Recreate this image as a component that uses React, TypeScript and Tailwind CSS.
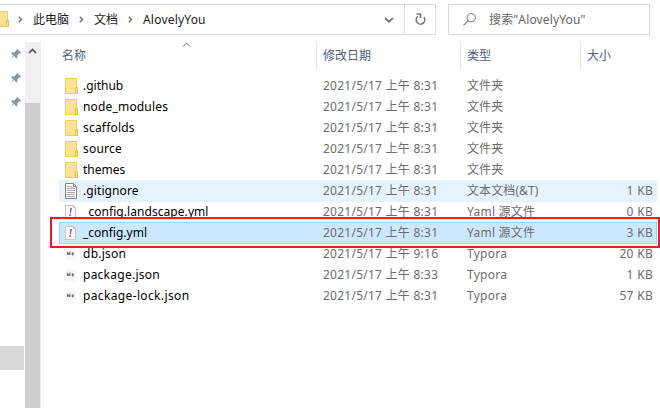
type Kind = 'folder' | 'text' | 'yaml' | 'typora';
type Entry = { name: string; kind: Kind; date: string; type: string; size?: string; tracking: string; state?: 'hover' | 'selected' };

const entries: Entry[] = [
  { name: '.github', kind: 'folder', date: '2021/5/17 上午 8:31', type: '文件夹', tracking: 'tracking-[0px]' },
  { name: 'node_modules', kind: 'folder', date: '2021/5/17 上午 8:31', type: '文件夹', tracking: 'tracking-[0.17px]' },
  { name: 'scaffolds', kind: 'folder', date: '2021/5/17 上午 8:31', type: '文件夹', tracking: 'tracking-[0.2px]' },
  { name: 'source', kind: 'folder', date: '2021/5/17 上午 8:31', type: '文件夹', tracking: 'tracking-[0.2px]' },
  { name: 'themes', kind: 'folder', date: '2021/5/17 上午 8:31', type: '文件夹', tracking: 'tracking-[0px]' },
  { name: '.gitignore', kind: 'text', date: '2021/5/17 上午 8:31', type: '文本文档(&T)', size: '1 KB', tracking: 'tracking-[0.1px]', state: 'hover' },
  { name: '_config.landscape.yml', kind: 'yaml', date: '2021/5/17 上午 8:31', type: 'Yaml 源文件', size: '0 KB', tracking: 'tracking-[0.06px]' },
  { name: '_config.yml', kind: 'yaml', date: '2021/5/17 上午 8:31', type: 'Yaml 源文件', size: '3 KB', tracking: 'tracking-[0px]', state: 'selected' },
  { name: 'db.json', kind: 'typora', date: '2021/5/17 上午 9:16', type: 'Typora', size: '20 KB', tracking: 'tracking-[0.25px]' },
  { name: 'package.json', kind: 'typora', date: '2021/5/17 上午 8:33', type: 'Typora', size: '1 KB', tracking: 'tracking-[0.25px]' },
  { name: 'package-lock.json', kind: 'typora', date: '2021/5/17 上午 8:31', type: 'Typora', size: '57 KB', tracking: 'tracking-[0.36px]' },
];

function FileIcon({ kind }: { kind: Kind }) {
  if (kind === 'folder')
    return (
      <svg className="block h-4 w-[13px]" viewBox="0 0 13 16">
        <path d="M.5.5h11v15H.5z" fill="#ffe393" stroke="#efcd5c" />
        <path d="M10.5 9.5h2v6h-2z" fill="#ffe393" stroke="#e6bd42" />
      </svg>
    );
  if (kind === 'text')
    return (
      <svg className="block h-4 w-[13px]" viewBox="0 0 13 16">
        <path d="M.5.5h8l3 3v12H.5z" fill="#fafafa" stroke="#858585" />
        <path d="M8.5.5v3h3" fill="none" stroke="#858585" />
        <path d="M2 3.5h5M2 5.5h8M2 7.5h8M2 9.5h8M2 11.5h8M2 13.5h8" stroke="#a8a8a8" />
      </svg>
    );
  if (kind === 'yaml')
    return (
      <svg className="block h-4 w-[13px]" viewBox="0 0 13 16">
        <path d="M.5 1.5h8l2 2v11H.5z" fill="#f8f8f8" stroke="#c4c4c4" />
        <path d="M8.5 1.5v2h2" fill="none" stroke="#c4c4c4" />
        <path d="M5.200 4h1.800L5.900 9.200H4.800zM4.500 10.200h1.500l-.3 1.700H4.200z" fill="#8e5bb5" />
      </svg>
    );
  return (
    <svg className="block h-4 w-[13px]" viewBox="0 0 13 16">
      <path d="M1 2h8l2 2v10H1z" fill="#f6f6f6" />
      <path d="M2.500 9V6.500L3.700 8l1.200-1.500V9M7.800 6v3M6.700 7.500l1.100 1.300 1.100-1.300" fill="none" stroke="#707070" strokeWidth="1.100" />
    </svg>
  );
}

function Chevron() {
  return (
    <svg className="h-[7px] w-[5px] shrink-0" viewBox="0 0 5 7">
      <path d="M.8.700l2.700 2.800L.8 6.300" fill="none" stroke="#777" strokeWidth="1.500" />
    </svg>
  );
}

function Pin() {
  return (
    <svg className="block h-3 w-3" viewBox="0 0 12 12">
      <path d="M7 .8l4.200 4-1.200.6-.7-.2-2 2.100.1 2.300-1 1L4 8.100.8 11.300.6 11l2.700-3.600L1 5.300l1-1 2.400.1 2.300-2.200-.3-.7z" fill="#8794a0" />
    </svg>
  );
}

export default function App() {
  return (
    <div className="relative flex h-[408px] w-[660px] flex-col overflow-hidden bg-white pt-1 text-[12px] leading-[20px] [font-family:'Noto_Sans','Noto_Sans_CJK_SC',sans-serif]">
      <div className="flex h-[31px] shrink-0">
        <div className="flex w-[436px] border border-l-0 border-[#d9d9d9]">
          <div className="flex grow items-center text-[#191919]">
            <svg className="mb-px h-4 w-[9px]" viewBox="0 0 9 16">
              <path d="M-1 .5h8.500v15H-1z" fill="#ffe393" stroke="#efcd5c" />
              <path d="M6.500 9.500h2v6h-2z" fill="#ffe393" stroke="#e6bd42" />
            </svg>
            <div className="ml-[9px] flex"><Chevron /></div>
            <span className="ml-[10px] w-9">此电脑</span>
            <div className="ml-[10px] flex"><Chevron /></div>
            <span className="ml-[10px] w-6">文档</span>
            <div className="ml-[10px] flex"><Chevron /></div>
            <span className="ml-[10px] tracking-[0.2px]">AlovelyYou</span>
          </div>
          <div className="flex w-[29px] items-center justify-center pr-px">
            <svg className="h-[6px] w-[10px]" viewBox="0 0 10 6"><path d="M1 1l4 3.700L9 1" fill="none" stroke="#777" strokeWidth="1.800" /></svg>
          </div>
          <div className="flex w-[31px] items-center justify-center border-l border-[#d9d9d9] pb-px">
            <svg className="h-[12px] w-[11px]" viewBox="0 0 11 12">
              <path d="M2.800 3.400A4.300 4.300 0 1 0 9 4.300M1.500 1h4v4" fill="none" stroke="#757575" strokeWidth="1.600" />
            </svg>
          </div>
        </div>
        <div className="ml-3 flex w-[202px] items-center border border-[#d9d9d9] pl-[14px] text-[#666]">
          <svg className="mb-px h-[13px] w-[13px]" viewBox="0 0 13 13">
            <circle cx="8.200" cy="4.700" r="4.100" fill="none" stroke="#757575" />
            <path d="M5.300 7.600L.5 12.400" stroke="#757575" strokeWidth="1.100" />
          </svg>
          <span className="ml-[13px] tracking-[0.15px]">搜索"AlovelyYou"</span>
        </div>
      </div>

      <div className="mt-[7px] flex grow">
        <div className="flex w-[25px] flex-col">
          <div className="flex flex-col gap-3 pt-[6px] pl-[10px]"><Pin /><Pin /><Pin /></div>
          <div className="mt-[238px] h-6 w-6 bg-[#d9d9d9]" />
        </div>
        <div className="flex w-4 flex-col bg-[#f0f0f0]">
          <div className="flex h-[61px] justify-center pt-[6px] pr-px">
            <svg className="h-[6px] w-[9px]" viewBox="0 0 9 6"><path d="M1 5l3.500-3.500L8 5" fill="none" stroke="#505050" strokeWidth="1.700" /></svg>
          </div>
          <div className="w-[15px] grow bg-[#cdcdcd]" />
        </div>
        <div className="ml-[2px] w-px bg-[#f3f3f3]" />

        <div className="flex grow flex-col">
          <div className="flex h-[27px] items-center text-[#4c607a]">
            <div className="flex h-full w-[272px] items-start pl-[18px]">
              <span className="pt-1">名称</span>
              <svg className="ml-[96px] h-[5px] w-[9px]" viewBox="0 0 9 5"><path d="M1 4.500L4.500 1 8 4.500" fill="none" stroke="#606060" /></svg>
            </div>
            <div className="flex h-full w-36 items-center border-l border-[#e5e5e5] pl-[6px]">修改日期</div>
            <div className="flex h-full w-[120px] items-center border-l border-[#e5e5e5] pl-[6px]">类型</div>
            <div className="flex h-full grow items-center border-l border-[#e5e5e5] pl-[6px]">大小</div>
          </div>
          <div className="mt-[6px] ml-[15px] w-[598px]">
            {entries.map((e) => (
              <div
                key={e.name}
                className={`-mb-px flex h-[22px] items-center text-[#6d6d6d] ${
                  e.state === 'hover' ? 'bg-[#e5f3ff]' : e.state === 'selected' ? 'bg-[#cce8ff] outline-1 -outline-offset-1 outline-[#99d1ff]' : ''
                }`}
              >
                <div className="ml-[6px] flex w-[18px]"><FileIcon kind={e.kind} /></div>
                <span className={`w-60 whitespace-nowrap text-black ${e.tracking}`}>{e.name}</span>
                <span className="w-36 whitespace-nowrap tracking-[0.25px]">{e.date}</span>
                <span className={`w-[106px] whitespace-nowrap ${/^[YT]/.test(e.type) ? 'tracking-[0.25px]' : 'tracking-[0.1px]'}`}>{e.type}</span>
                <span className="w-20 text-right whitespace-nowrap tracking-[0.3px]">{e.size}</span>
              </div>
            ))}
          </div>
        </div>
      </div>
      <div className="absolute top-[217px] left-[50px] h-[31px] w-[610px] border-2 border-[#ed1c24]" />
    </div>
  );
}
